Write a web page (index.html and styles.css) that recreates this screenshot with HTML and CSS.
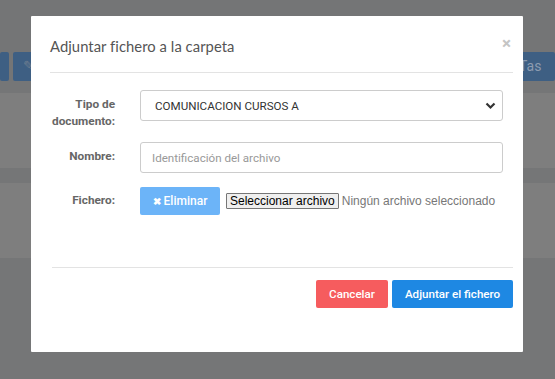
FILE: index.html
```html
<!DOCTYPE html>
<html lang="es">
<head>
<meta charset="utf-8">
<link rel="stylesheet" href="styles.css">
</head>
<body>
<div class="page">
  <div class="topband"></div>
  <div class="toolbar">
    <div class="tbtn tb1"></div>
    <div class="tbtn tb2"><span class="pencil">✎</span></div>
    <div class="tb-spacer"></div>
    <div class="tbtn tb3">Tas</div>
  </div>
  <div class="gap"></div>
  <div class="band"></div>
  <div class="gap2"></div>
  <div class="band band2"></div>
</div>

<div class="modal">
  <div class="modal-header">
    <h4 class="modal-title">Adjuntar fichero a la carpeta</h4>
    <span class="close">×</span>
  </div>
  <div class="modal-body">
    <div class="row row1">
      <label class="lbl">Tipo de documento:</label>
      <div class="ctrl">
        <div class="select">
          <span>COMUNICACION CURSOS A</span>
          <svg class="chev" width="11" height="8" viewBox="0 0 11 8"><path d="M1.5 1.5 L5.5 5.5 L9.5 1.5" fill="none" stroke="#333" stroke-width="2.2"/></svg>
        </div>
      </div>
    </div>
    <div class="row row2">
      <label class="lbl">Nombre:</label>
      <div class="ctrl">
        <div class="input">Identificación del archivo</div>
      </div>
    </div>
    <div class="row row3">
      <label class="lbl">Fichero:</label>
      <div class="ctrl fileline">
        <span class="btn-elim"><b class="x">✖</b>Eliminar</span>
        <span class="filebtn">Seleccionar archivo</span>
        <span class="nofile">Ningún archivo seleccionado</span>
      </div>
    </div>
  </div>
  <div class="modal-footer">
    <span class="btn btn-cancel">Cancelar</span>
    <span class="btn btn-ok">Adjuntar el fichero</span>
  </div>
</div>
</body>
</html>
```
FILE: styles.css
```css
html, body { margin: 0; padding: 0; }
body {
  width: 555px; height: 379px; overflow: hidden;
  background: #757677;
  font-family: Roboto, "Liberation Sans", sans-serif;
  position: relative;
}
.page { display: flex; flex-direction: column; }
.topband { height: 52px; background: #747576; }
.toolbar { height: 29px; display: flex; gap: 4px; background: #747576; }
.tbtn { background: #3e5f83; border-radius: 2px; }
.tb1 { width: 9px; }
.tb2 { width: 40px; position: relative; }
.pencil { color: #6d7d8f; font-size: 13px; position: absolute; left: 10px; top: 6px; }
.tb-spacer { flex: 1; }
.tb3 { width: 38px; color: #8c9bb0; font-size: 14px; line-height: 29px; padding-left: 2px; box-sizing: border-box; }
.gap { height: 12px; background: #757677; }
.band { height: 75px; background: #7e7e7e; }
.gap2 { height: 15px; background: #757677; }
.band2 { height: 75px; }

.modal {
  position: absolute; left: 31px; top: 16px;
  width: 492px; height: 336px;
  background: #fff;
  border-radius: 1px;
  box-sizing: border-box;
  padding: 0 10px 0 19px;
}
.modal-header {
  height: 57px; box-sizing: border-box;
  border-bottom: 1px solid #e3e3e3;
  display: flex; align-items: center; justify-content: space-between;
  padding-top: 4px;
}
.modal-title {
  margin: 0; font-family: Lato, "Open Sans", sans-serif; font-weight: 400;
  font-size: 14.8px; color: #555; letter-spacing: 0.05px;
}
.close { color: #c4c4c4; font-size: 17px; font-weight: 700; margin-right: 2px; margin-top: -7px; }

.modal-body { padding: 17px 0 0 0; display: flex; flex-direction: column; height: 195px; box-sizing: border-box; border-bottom: 1px solid #e3e3e3; margin-left: 2px; }
.row { display: flex; align-items: flex-start; height: 31px; }
.row2 { margin-top: 21px; }
.row3 { margin-top: 14px; height: 28px; }
.lbl {
  width: 63px; text-align: right; font-weight: 700; font-size: 11.8px;
  color: #666; line-height: 17px; padding-top: 6px; flex: none;
}
.ctrl { margin-left: 25px; width: 363px; }
.select, .input {
  height: 31px; box-sizing: border-box; border: 1px solid #ccc; border-radius: 3px;
  display: flex; align-items: center; padding-left: 14px; font-size: 11.6px;
}
.select { color: #333; justify-content: space-between; padding-right: 6px; }
.input { color: #999; padding-left: 11px; }
.row3 .lbl { padding-top: 5px; }
.fileline { display: flex; align-items: center; white-space: nowrap; }
.btn-elim {
  background: #6cb4f8; color: #fff; font-weight: 500; font-size: 12px;
  width: 80px; height: 28px; border-radius: 2px; flex: none;
  display: flex; align-items: center; justify-content: center; gap: 3px; box-sizing: border-box;
}
.x { font-size: 10px; }
.filebtn {
  margin-left: 6px; border: 1px solid #767676; background: #efefef; color: #000;
  font-size: 12px; padding: 0 3px; height: 16px; line-height: 14px; box-sizing: border-box;
  border-radius: 1px; font-family: "Liberation Sans", Arial, sans-serif; flex: none;
}
.nofile { margin-left: 3px; font-size: 12px; color: #777; font-family: "Liberation Sans", Arial, sans-serif; }

.modal-footer { display: flex; justify-content: flex-end; gap: 4px; padding-top: 12px; margin-left: 2px; }
.btn {
  height: 28px; display: flex; align-items: center; justify-content: center; color: #fff;
  font-size: 11.6px; font-weight: 500; border-radius: 2px; box-sizing: border-box;
}
.btn-cancel { background: #f65c5e; width: 72px; }
.btn-ok { background: #1e88e3; width: 121px; }
```
